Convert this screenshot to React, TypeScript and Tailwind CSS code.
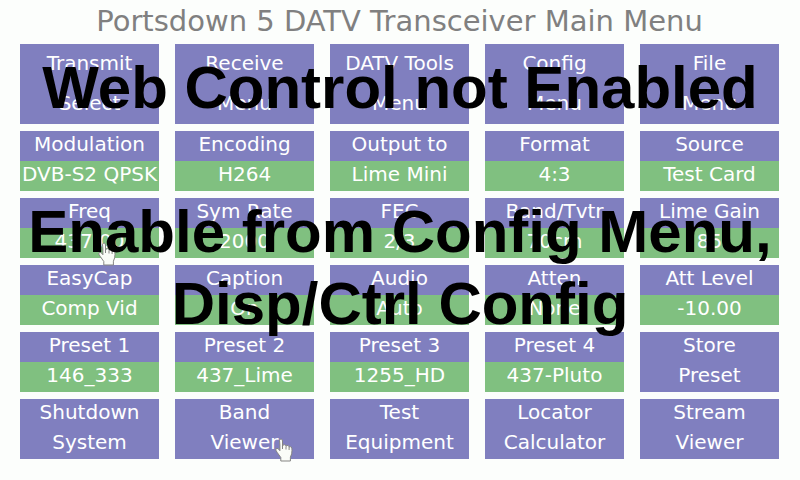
type Tile = { top: string; bottom: string; split?: boolean };

const mainRow: Tile[] = [
  { top: "Transmit", bottom: "Select" },
  { top: "Receive", bottom: "Menu" },
  { top: "DATV Tools", bottom: "Menu" },
  { top: "Config", bottom: "Menu" },
  { top: "File", bottom: "Menu" },
];

const tiles: Tile[] = [
  { top: "Modulation", bottom: "DVB-S2 QPSK", split: true },
  { top: "Encoding", bottom: "H264", split: true },
  { top: "Output to", bottom: "Lime Mini", split: true },
  { top: "Format", bottom: "4:3", split: true },
  { top: "Source", bottom: "Test Card", split: true },
  { top: "Freq", bottom: "437.00", split: true },
  { top: "Sym Rate", bottom: "2000", split: true },
  { top: "FEC", bottom: "2/3", split: true },
  { top: "Band/Tvtr", bottom: "70cm", split: true },
  { top: "Lime Gain", bottom: "85", split: true },
  { top: "EasyCap", bottom: "Comp Vid", split: true },
  { top: "Caption", bottom: "On", split: true },
  { top: "Audio", bottom: "Auto", split: true },
  { top: "Atten", bottom: "None", split: true },
  { top: "Att Level", bottom: "-10.00", split: true },
  { top: "Preset 1", bottom: "146_333", split: true },
  { top: "Preset 2", bottom: "437_Lime", split: true },
  { top: "Preset 3", bottom: "1255_HD", split: true },
  { top: "Preset 4", bottom: "437-Pluto", split: true },
  { top: "Store", bottom: "Preset" },
  { top: "Shutdown", bottom: "System" },
  { top: "Band", bottom: "Viewer" },
  { top: "Test", bottom: "Equipment" },
  { top: "Locator", bottom: "Calculator" },
  { top: "Stream", bottom: "Viewer" },
];

function MenuButton({ tile, tall = false }: { tile: Tile; tall?: boolean }) {
  const line = tall ? "h-10 leading-[38px]" : "h-[30px] leading-[26px]";
  return (
    <button type="button" className="min-w-0 bg-[#807fbf] text-center text-xl whitespace-nowrap text-white">
      <span className={`flex justify-center ${line}`}>{tile.top}</span>
      <span className={`flex justify-center ${line} ${tile.split ? "bg-[#80c080]" : ""}`}>{tile.bottom}</span>
    </button>
  );
}

function Hand({ className }: { className: string }) {
  return (
    <svg aria-hidden="true" viewBox="0 0 18 24" className={`absolute h-6 w-[18px] ${className}`}>
      <path
        d="M4.5 2.2Q5 .8 6.4 1.2Q7.4 1.4 7.5 3V8.2Q8.2 6.2 9.8 6.7Q10.8 7 11 8.3Q12 6.9 13.2 7.6Q14 8 14.1 9.1Q15.2 8.1 16.2 9Q17 9.8 17 12.2Q17.1 16 15.4 19.2V23H5.8V19.5L2.1 14.3L.8 12.1Q.6 10.5 2 10.3Q3.3 10.3 4.9 12.7V7Z"
        fill="#fafcf8"
        stroke="#858583"
        strokeWidth="1"
        strokeLinejoin="round"
      />
      <path d="M7.5 7V11M11 8.5V11.5M14.1 9V12" fill="none" stroke="#858583" />
    </svg>
  );
}

export default function App() {
  return (
    <main className="relative min-h-screen bg-[#fcfefc] pr-[21px] pb-5 pl-5 font-['DejaVu_Sans',sans-serif]">
      <h1 className="flex h-11 justify-center text-[29px] leading-[42px] whitespace-nowrap text-[#808080]">
        Portsdown 5 DATV Transceiver Main Menu
      </h1>
      <div className="grid grid-cols-5 gap-x-4 gap-y-[7px]">
        {mainRow.map((tile) => (
          <MenuButton key={tile.top} tile={tile} tall />
        ))}
        {tiles.map((tile) => (
          <MenuButton key={tile.top} tile={tile} />
        ))}
      </div>
      <Hand className="top-[242px] left-[98px]" />
      <Hand className="top-[438px] left-[275px]" />
      <div
        role="alert"
        className="pointer-events-none absolute inset-x-0 top-[52px] text-center font-['Liberation_Sans',sans-serif] text-[60px] leading-[72px] font-bold whitespace-nowrap text-black"
      >
        <p className="mb-[72px]">Web Control not Enabled</p>
        <p>Enable from Config Menu,</p>
        <p>Disp/Ctrl Config</p>
      </div>
    </main>
  );
}
